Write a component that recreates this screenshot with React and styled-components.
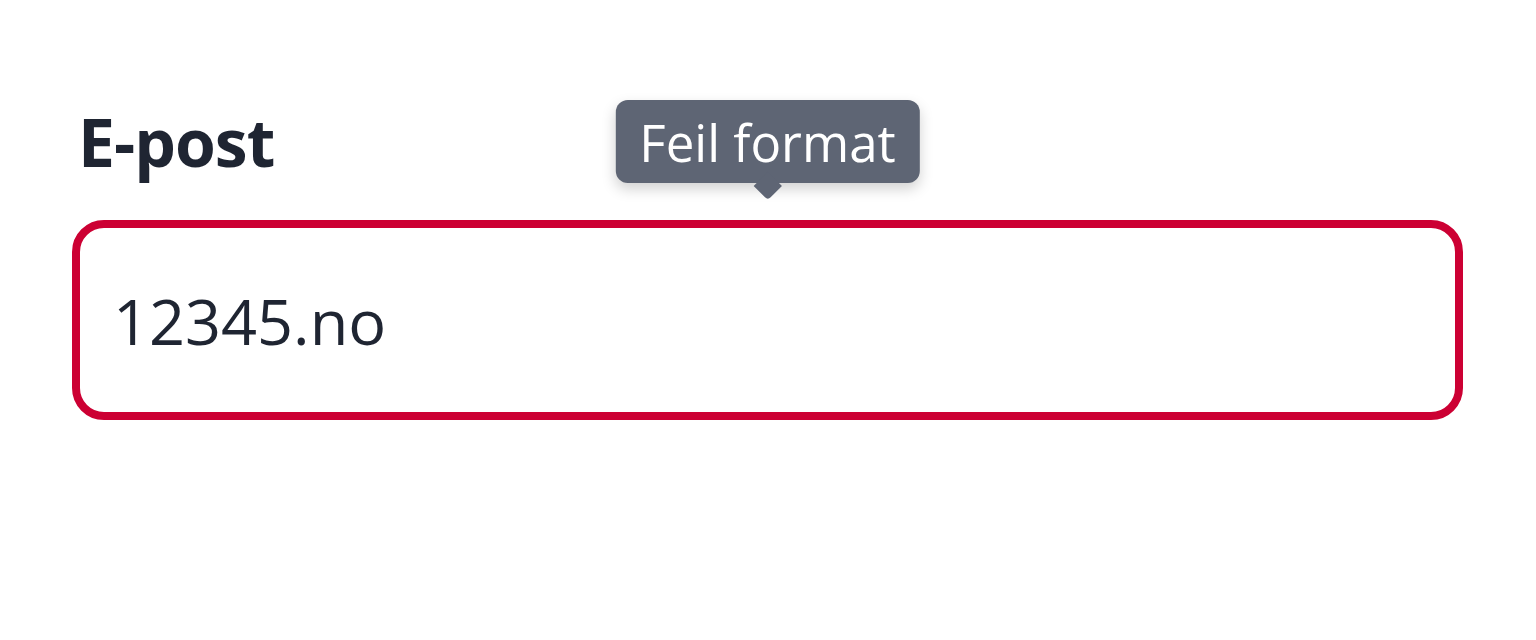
import React from 'react';
import styled, { createGlobalStyle } from 'styled-components';

const GlobalStyle = createGlobalStyle`
  html, body {
    margin: 0;
    padding: 0;
    background: #fff;
    font-family: 'Open Sans', 'Noto Sans', sans-serif;
  }
`;

const Page = styled.div`
  padding: 93px 73px 0 72px;
  box-sizing: border-box;
  width: 1536px;
  height: 640px;
`;

const Field = styled.div`
  position: relative;
  display: flex;
  flex-direction: column;
`;

const Label = styled.label`
  padding-left: 6px;
  font-size: 66px;
  font-weight: 700;
  line-height: 96px;
  color: #1f2532;
  letter-spacing: -1px;
`;

const Input = styled.input`
  margin-top: 31px;
  height: 200px;
  box-sizing: border-box;
  border: 8px solid ${(props) => (props.invalid ? '#cc0033' : '#8a909c')};
  border-radius: 32px;
  padding: 0 34px 0 33px;
  font-family: inherit;
  font-size: 63px;
  color: #1f2532;
  outline: none;
  background: #fff;
`;

const Tooltip = styled.div`
  position: absolute;
  top: 7px;
  left: 50%;
  transform: translateX(-50%);
  height: 83px;
  padding: 0 24px;
  display: flex;
  align-items: center;
  background: #5e6574;
  color: #fff;
  font-size: 51px;
  border-radius: 12px;
  box-shadow: 0 6px 14px rgba(0, 0, 0, 0.18);
  white-space: nowrap;

  &:after {
    content: '';
    position: absolute;
    left: 50%;
    bottom: -13px;
    width: 20px;
    height: 20px;
    background: #5e6574;
    transform: translateX(-50%) rotate(45deg);
    border-radius: 0 0 4px 0;
  }
`;

const App = () => {
  return (
    <Page>
      <GlobalStyle />
      <Field>
        <Label htmlFor="epost">E-post</Label>
        <Input id="epost" invalid defaultValue="12345.no" />
        <Tooltip role="tooltip">Feil format</Tooltip>
      </Field>
    </Page>
  );
};

export default App;
